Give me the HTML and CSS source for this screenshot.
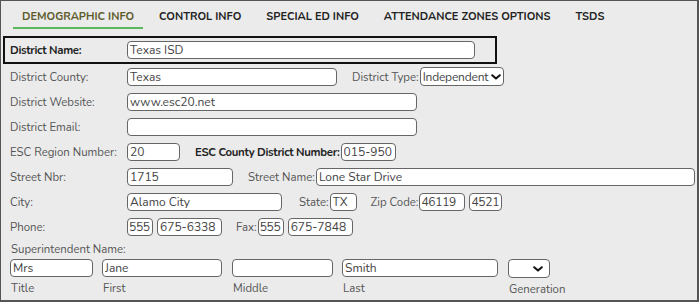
FILE: index.html
```html
<!DOCTYPE html>
<html lang="en">
    <head>
        <meta charset="UTF-8" />
        <meta name="viewport" content="width=device-width, initial-scale=1.0" />
        <title>District Information</title>
        <link rel="stylesheet" href="styles.css">
    </head>
    <body>
        <div class="page">
            <!-- Tabs -->
            <div class="tabs">
                <span class="tab active">DEMOGRAPHIC INFO</span>
                <span class="tab">CONTROL INFO</span>
                <span class="tab">SPECIAL ED INFO</span>
                <span class="tab">ATTENDANCE ZONES OPTIONS</span>
                <span class="tab">TSDS</span>
            </div>

            <!-- Form -->
            <div class="form">
                <div class="row highlight">
                    <label class="label strong">District Name:</label>
                    <input class="field w-name" type="text" value="Texas ISD">
                </div>

                <div class="row">
                    <label class="label">District County:</label>
                    <input class="field w-county" type="text" value="Texas">
                    <label class="inline-label type-label">District Type:</label>
                    <span class="select-wrap w-type">
                        <select class="field select">
                            <option>Independent</option>
                        </select>
                        <svg class="chev" viewBox="0 0 10 6" width="10" height="6"><path d="M1.2 1.2 L5 4.6 L8.8 1.2" fill="none" stroke="#111" stroke-width="2" stroke-linecap="round" stroke-linejoin="round"/></svg>
                    </span>
                </div>

                <div class="row">
                    <label class="label">District Website:</label>
                    <input class="field w-web" type="text" value="www.esc20.net">
                </div>

                <div class="row">
                    <label class="label">District Email:</label>
                    <input class="field w-web" type="text" value="">
                </div>

                <div class="row">
                    <label class="label">ESC Region Number:</label>
                    <input class="field w-region" type="text" value="20">
                    <label class="inline-label strong esc-label">ESC County District Number:</label>
                    <input class="field w-cdn" type="text" value="015-950">
                </div>

                <div class="row">
                    <label class="label">Street Nbr:</label>
                    <input class="field w-nbr" type="text" value="1715">
                    <label class="inline-label street-label">Street Name:</label>
                    <input class="field w-street" type="text" value="Lone Star Drive">
                </div>

                <div class="row">
                    <label class="label">City:</label>
                    <input class="field w-city" type="text" value="Alamo City">
                    <label class="inline-label state-label">State:</label>
                    <input class="field w-state" type="text" value="TX">
                    <label class="inline-label zip-label">Zip Code:</label>
                    <input class="field w-zip small" type="text" value="46119">
                    <input class="field w-zip4 small gap-l" type="text" value="4521">
                </div>

                <div class="row">
                    <label class="label">Phone:</label>
                    <input class="field w-area small" type="text" value="555">
                    <input class="field w-phone gap-l" type="text" value="675-6338">
                    <label class="inline-label fax-label">Fax:</label>
                    <input class="field w-area small" type="text" value="555">
                    <input class="field w-phone gap-l" type="text" value="675-7848">
                </div>

                <div class="super-title">Superintendent Name:</div>
                <div class="name-grid">
                    <div class="name-col col-title">
                        <input class="field" type="text" value="Mrs">
                        <span class="caption">Title</span>
                    </div>
                    <div class="name-col col-first">
                        <input class="field" type="text" value="Jane">
                        <span class="caption">First</span>
                    </div>
                    <div class="name-col col-middle">
                        <input class="field" type="text" value="">
                        <span class="caption">Middle</span>
                    </div>
                    <div class="name-col col-last">
                        <input class="field" type="text" value="Smith">
                        <span class="caption">Last</span>
                    </div>
                    <div class="name-col col-gen">
                        <span class="select-wrap">
                            <select class="field select">
                                <option></option>
                            </select>
                            <svg class="chev" viewBox="0 0 10 6" width="10" height="6"><path d="M1.2 1.2 L5 4.6 L8.8 1.2" fill="none" stroke="#111" stroke-width="2" stroke-linecap="round" stroke-linejoin="round"/></svg>
                        </span>
                        <span class="caption">Generation</span>
                    </div>
                </div>
            </div>
        </div>
    </body>
</html>
```

FILE: styles.css
```css
html,
body {
    margin: 0;
    padding: 0;
}

body {
    font-family: "Nunito", "Lato", "Noto Sans", sans-serif;
    font-size: 11.4px;
    color: #555;
    background-color: #ebebeb;
}

.page {
    width: 699px;
    height: 302px;
    box-sizing: border-box;
    border: 1px solid #555;
    border-right-width: 2px;
    border-bottom-width: 2px;
    overflow: hidden;
}

/* tabs */
.tabs {
    display: flex;
    padding-left: 12px;
    height: 29px;
    gap: 7px;
}

.tab {
    padding: 0 9px;
    line-height: 32px;
    height: 26px;
    font-size: 11px;
    font-weight: 700;
    color: #222;
    white-space: nowrap;
}

.tab.active {
    color: #5e5b2b;
    border-bottom: 2px solid #5cb85c;
}

/* form rows */
.form {
    padding-top: 6px;
}

.row {
    display: flex;
    align-items: center;
    height: 25px;
    padding-left: 9px;
    white-space: nowrap;
}

.row.highlight {
    margin-left: 2px;
    padding-left: 5px;
    width: 485px;
    height: 24px;
    border: 2px solid #111;
}

.label {
    width: 117px;
    flex-shrink: 0;
}

.strong {
    font-weight: 700;
    color: #222;
    letter-spacing: -0.3px;
}

.inline-label {
    margin-right: 1px;
    flex-shrink: 0;
}

.field {
    height: 18px;
    box-sizing: border-box;
    flex-shrink: 0;
    border: 1px solid #666;
    border-radius: 4px;
    background-color: #fff;
    font-family: inherit;
    font-size: 12px;
    color: #444;
    padding: 0 2px;
    margin: 0;
    outline: none;
}

.field.small {
    padding: 0 1px;
    letter-spacing: -0.3px;
}

/* custom select with chevron overlay */
.select-wrap {
    position: relative;
    display: inline-flex;
    flex-shrink: 0;
}

.select {
    appearance: none;
    -webkit-appearance: none;
    width: 100%;
    height: 19px;
    padding: 0 12px 0 2px;
    letter-spacing: -0.2px;
    cursor: pointer;
}

.chev {
    position: absolute;
    right: 3px;
    top: 7px;
    pointer-events: none;
}

.col-gen .chev {
    right: 7px;
}

.gap-l {
    margin-left: 4px;
}

/* widths */
.w-name { width: 348px; }
.w-county { width: 210px; }
.w-type { width: 84px; }
.w-web { width: 290px; }
.w-region { width: 53px; }
.w-cdn { width: 55px; }
.w-nbr { width: 106px; }
.w-street { width: 379px; }
.w-city { width: 155px; }
.w-state { width: 27px; }
.w-zip { width: 46px; }
.w-zip4 { width: 33px; }
.w-area { width: 26px; }
.w-phone { width: 65px; }

.type-label { margin-left: 15px; }
.esc-label { margin-left: 15px; }
.street-label { margin-left: 15px; }
.state-label { margin-left: 17px; }
.zip-label { margin-left: 14px; }
.fax-label { margin-left: 14px; }

/* superintendent */
.super-title {
    padding-left: 10px;
    height: 18px;
    line-height: 20px;
}

.name-grid {
    display: flex;
    padding-left: 9px;
    padding-top: 2px;
}

.name-col {
    display: flex;
    flex-direction: column;
}

.name-col .field {
    width: 100%;
}

.caption {
    padding-left: 1px;
    line-height: 22px;
    white-space: nowrap;
}

.col-title { width: 83px; margin-right: 9px; }
.col-first { width: 120px; margin-right: 10px; }
.col-middle { width: 101px; margin-right: 9px; }
.col-last { width: 156px; margin-right: 10px; }
.col-gen { width: 42px; }
```
